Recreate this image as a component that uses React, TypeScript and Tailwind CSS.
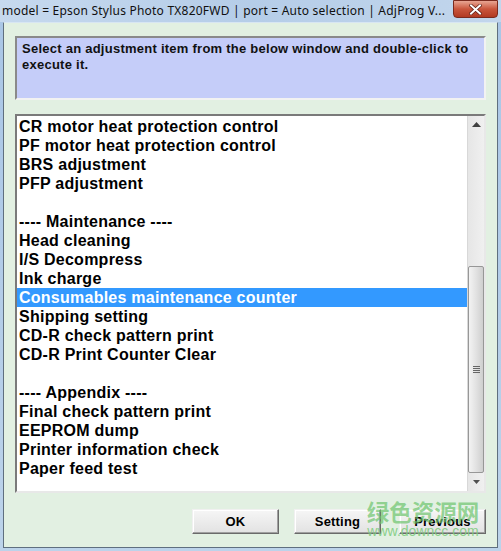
import React from "react";

const items: string[] = [
  "CR motor heat protection control",
  "PF motor heat protection control",
  "BRS adjustment",
  "PFP adjustment",
  "",
  "---- Maintenance ----",
  "Head cleaning",
  "I/S Decompress",
  "Ink charge",
  "Consumables maintenance counter",
  "Shipping setting",
  "CD-R check pattern print",
  "CD-R Print Counter Clear",
  "",
  "---- Appendix ----",
  "Final check pattern print",
  "EEPROM dump",
  "Printer information check",
  "Paper feed test",
];

function Btn({ label, className }: { label: string; className?: string }) {
  return (
    <div
      className={
        "w-[87px] h-[25px] flex items-center justify-center text-[13px] font-bold tracking-[0.2px] text-black bg-gradient-to-b from-[#f6f6f6] to-[#e2e2e2] border border-t-[#f0f0f0] border-l-[#f0f0f0] border-r-[#6a6a6a] border-b-[#6a6a6a] shadow-[inset_-1px_-1px_0_#a0a0a0,inset_1px_1px_0_#ffffff] " +
        (className ?? "")
      }
      style={{ fontFamily: '"Liberation Sans", Arial, sans-serif' }}
    >
      {label}
    </div>
  );
}

export default function App() {
  return (
    <div
      className="relative w-[501px] h-[551px] overflow-hidden bg-gradient-to-b from-[#a9c6e6] to-[#bcd3ea] flex flex-col"
      style={{ fontFamily: '"Liberation Sans", Arial, sans-serif' }}
    >
      {/* Title bar */}
      <div className="relative h-[22px] shrink-0 flex items-center pl-[2px] bg-gradient-to-r from-[#c6d9ee] via-[#b5cde8] to-[#c2d6ec]">
        <span
          className="text-[12px] text-[#101010] whitespace-nowrap tracking-[0.22px]"
          style={{ fontFamily: '"Noto Sans", "Open Sans", sans-serif' }}
        >
          model = Epson Stylus Photo TX820FWD | port = Auto selection | AdjProg V...
        </span>
        <div className="absolute right-[3px] top-0 w-[45px] h-[18px] rounded-b-[4px] border border-[#7a2a1e] bg-gradient-to-b from-[#e8a593] via-[#c9553c] to-[#b23a22] flex items-center justify-center">
          <svg width="13" height="11" viewBox="0 0 13 11">
            <path
              d="M2 1.5 L11 9.5 M11 1.5 L2 9.5"
              stroke="#5a1a10"
              strokeWidth="3.4"
              strokeLinecap="square"
            />
            <path
              d="M2 1.5 L11 9.5 M11 1.5 L2 9.5"
              stroke="#ffffff"
              strokeWidth="2"
              strokeLinecap="square"
            />
          </svg>
        </div>
      </div>

      {/* Client area */}
      <div className="flex-1 mx-[3px] mb-[3px] bg-[#e2f0e2] border border-[#5f6f7f] border-t-[#d8e6f2] flex flex-col pt-[13px] pl-[11px] pr-[11px] pb-[13px]">
        {/* Instruction box */}
        <div className="h-[64px] bg-[#c5cdf9] border-2 border-t-[#8a8a8a] border-l-[#8a8a8a] border-r-[#f2f2f2] border-b-[#f2f2f2] pl-[5px] pr-[6px] pt-[3px]">
          <p className="text-[13px] font-bold leading-[16px] tracking-[0.25px] text-[#111]">
            Select an adjustment item from the below window and double-click to execute it.
          </p>
        </div>

        {/* List box */}
        <div className="mt-[14px] h-[379px] bg-white border-2 border-t-[#7a7a7a] border-l-[#7a7a7a] border-r-[#e8e8e8] border-b-[#e8e8e8] flex">
          <div className="flex-1 flex flex-col overflow-hidden pt-[1px]">
            {items.map((t, i) => (
              <div
                key={i}
                className={
                  "h-[19px] shrink-0 flex items-center pl-[2px] text-[16px] font-bold tracking-[0.25px] whitespace-nowrap " +
                  (i === 9 ? "bg-[#3399ff] text-white" : "text-black")
                }
              >
                {t}
              </div>
            ))}
          </div>
          {/* Scrollbar */}
          <div className="w-[17px] shrink-0 flex flex-col bg-gradient-to-r from-[#e6e6e6] to-[#f0f0f0] border-l border-[#d8d8d8]">
            <div className="h-[17px] flex items-center justify-center">
              <svg width="9" height="5" viewBox="0 0 9 5">
                <path d="M0 5 L4.5 0 L9 5 Z" fill="#404040" />
              </svg>
            </div>
            <div className="h-[133px]" />
            <div className="h-[207px] rounded-[2px] border border-[#979797] bg-gradient-to-r from-[#f3f3f3] via-[#e2e2e2] to-[#cfcfcf] flex items-center justify-center">
              <svg width="7" height="8" viewBox="0 0 7 8">
                <path d="M0 0.5 H7 M0 2.5 H7 M0 4.5 H7 M0 6.5 H7" stroke="#666" strokeWidth="1" />
              </svg>
            </div>
            <div className="flex-1 flex items-center justify-center">
              <svg width="7" height="4" viewBox="0 0 7 4">
                <path d="M0 0 L3.5 4 L7 0 Z" fill="#505050" />
              </svg>
            </div>
          </div>
        </div>

        {/* Buttons */}
        <div className="mt-auto flex justify-end items-end">
          <Btn label="OK" />
          <Btn label="Setting" className="ml-[15px]" />
          <Btn label="Previous" className="ml-[18px]" />
        </div>
      </div>

      {/* Watermark */}
      <div className="absolute left-[366px] top-[497px] w-[114px] flex flex-col items-center pointer-events-none">
        <span
          className="text-[22.5px] font-bold leading-[28px] text-[#6cc46c]/70"
          style={{ fontFamily: '"Noto Sans CJK SC", sans-serif' }}
        >
          绿色资源网
        </span>
        <span
          className="text-[14px] leading-[13px] text-[#7fcc7f]/90"
          style={{ fontFamily: '"Liberation Sans", Arial, sans-serif' }}
        >
          www.downcc.com
        </span>
      </div>
    </div>
  );
}
